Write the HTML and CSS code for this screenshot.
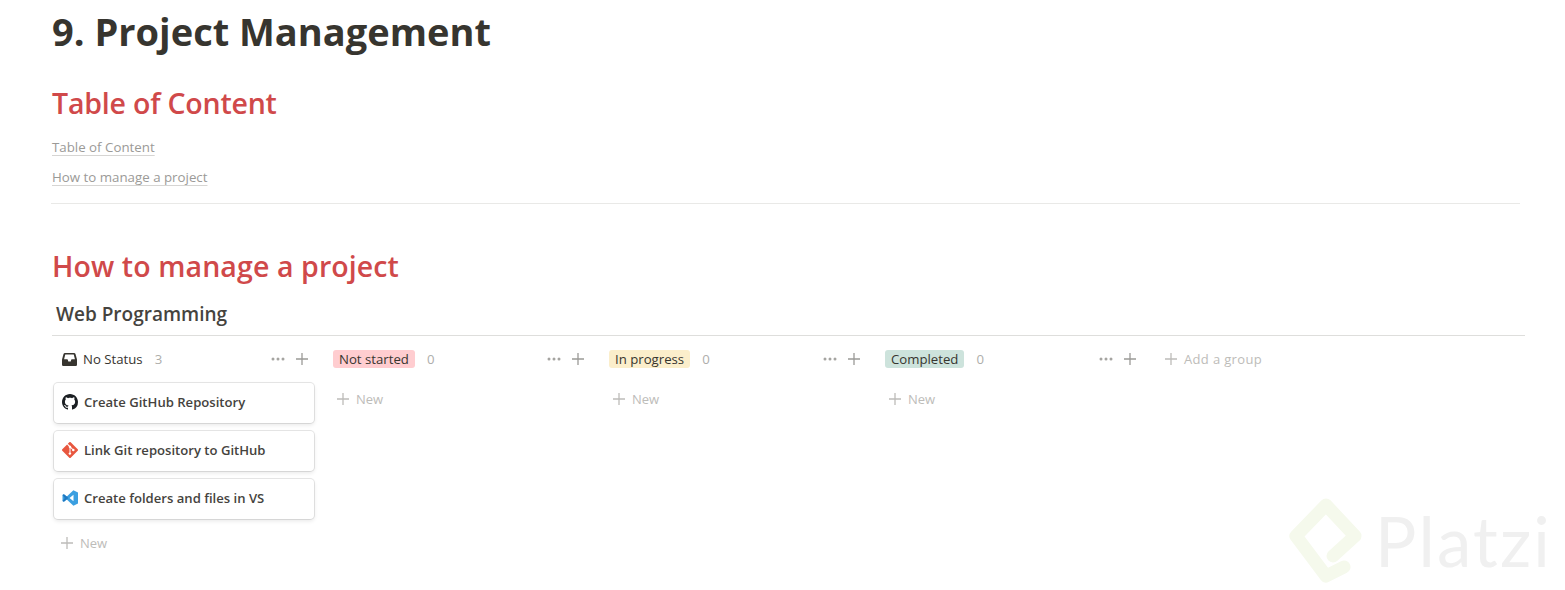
FILE: index.html
```html
<!DOCTYPE html>
<html>
<head>
  <title>9. Project Management</title>
  <link rel="stylesheet" href="styles.css">
</head>
<body>

<div class="page">
  <h1 class="page-title">9. Project Management</h1>

  <h2 class="section-title first">Table of Content</h2>
  <div class="toc">
    <div class="toc-row"><a class="toc-link">Table of Content</a></div>
    <div class="toc-row"><a class="toc-link">How to manage a project</a></div>
  </div>
  <div class="divider"></div>

  <h2 class="section-title second">How to manage a project</h2>
  <div class="db-title">Web Programming</div>

  <div class="board">
    <div class="column">
      <div class="column-head">
        <span class="status-plain">
          <svg class="inbox-icon" viewBox="0 0 16 16" width="15" height="15"><path fill="#37352f" d="M3.200 1h9.600c.8 0 1.300.4 1.600 1.100L16 8v5.300c0 1-.7 1.700-1.700 1.700H1.700C.7 15 0 14.300 0 13.300V8l1.600-5.900C1.900 1.400 2.400 1 3.200 1z"/><path fill="#fff" d="M3.500 2.700h9l1.300 5.100h-3.300c-.4 0-.6.200-.7.500L9.300 10H6.700l-.5-1.700c-.1-.3-.3-.5-.7-.5H2.200z"/></svg>
          No Status
        </span>
        <span class="count">3</span>
        <span class="head-actions">
          <svg class="dots" viewBox="0 0 14 4" width="14" height="4"><circle cx="2" cy="2" r="1.500"/><circle cx="7" cy="2" r="1.500"/><circle cx="12" cy="2" r="1.500"/></svg>
          <svg class="plus" viewBox="0 0 12 12" width="12" height="12"><path d="M6 0v12M0 6h12"/></svg>
        </span>
      </div>

      <div class="card">
        <svg class="card-icon" viewBox="0 0 16 16" width="16" height="16"><path fill="#1b1f23" d="M8 0C3.580 0 0 3.580 0 8c0 3.540 2.290 6.530 5.470 7.590.4.070.55-.17.55-.38 0-.19-.01-.82-.01-1.490-2.010.37-2.530-.49-2.690-.94-.09-.23-.48-.94-.82-1.130-.28-.15-.68-.52-.01-.53.63-.01 1.080.58 1.230.82.720 1.210 1.870.870 2.330.660.070-.520.280-.870.510-1.070-1.780-.200-3.640-.890-3.640-3.950 0-.870.310-1.590.820-2.150-.080-.200-.360-1.020.080-2.120 0 0 .670-.210 2.200.820.640-.180 1.320-.270 2-.270s1.360.090 2 .270c1.530-1.040 2.200-.820 2.200-.820.440 1.100.160 1.920.080 2.120.510.560.820 1.270.820 2.150 0 3.070-1.870 3.750-3.650 3.950.290.250.540.730.540 1.480 0 1.070-.010 1.930-.010 2.200 0 .210.150.460.550.380A8.010 8.010 0 0 0 16 8c0-4.420-3.580-8-8-8z"/></svg>
        <span class="card-name">Create GitHub Repository</span>
      </div>
      <div class="card">
        <svg class="card-icon" viewBox="0 0 16 16" width="16" height="16"><path fill="#e8573f" d="M15.700 7.300 8.700.3a1 1 0 0 0-1.400 0L5.800 1.800l1.800 1.800a1.200 1.200 0 0 1 1.500 1.500l1.800 1.800a1.200 1.200 0 1 1-.7.700L8.500 6.100v4.400a1.200 1.200 0 1 1-1-.100V6a1.200 1.200 0 0 1-.6-1.600L5.100 2.500.3 7.300a1 1 0 0 0 0 1.400l7 7a1 1 0 0 0 1.400 0l7-7a1 1 0 0 0 0-1.400z"/></svg>
        <span class="card-name">Link Git repository to GitHub</span>
      </div>
      <div class="card">
        <svg class="card-icon" viewBox="0 0 16 16" width="16" height="16"><path fill="#3b9fe0" d="M11.400.2 16 2.400v11.200l-4.600 2.200-6.600-6.300-2.900 2.200L.5 11V5l1.400-.7 2.900 2.200zM11.500 4.800 7.500 8l4 3.200z"/><path fill="#1f78c1" d="M.5 5l1.400-.7L4.800 6.500 6.400 8l-4.500 3.700L.5 11l2.300-3z"/></svg>
        <span class="card-name">Create folders and files in VS</span>
      </div>

      <div class="new-row first-new">
        <svg class="plus light" viewBox="0 0 12 12" width="12" height="12"><path d="M6 0v12M0 6h12"/></svg>
        New
      </div>
    </div>

    <div class="column">
      <div class="column-head">
        <span class="pill pill-red">Not started</span>
        <span class="count">0</span>
        <span class="head-actions">
          <svg class="dots" viewBox="0 0 14 4" width="14" height="4"><circle cx="2" cy="2" r="1.500"/><circle cx="7" cy="2" r="1.500"/><circle cx="12" cy="2" r="1.500"/></svg>
          <svg class="plus" viewBox="0 0 12 12" width="12" height="12"><path d="M6 0v12M0 6h12"/></svg>
        </span>
      </div>
      <div class="new-row">
        <svg class="plus light" viewBox="0 0 12 12" width="12" height="12"><path d="M6 0v12M0 6h12"/></svg>
        New
      </div>
    </div>

    <div class="column">
      <div class="column-head">
        <span class="pill pill-yellow">In progress</span>
        <span class="count">0</span>
        <span class="head-actions">
          <svg class="dots" viewBox="0 0 14 4" width="14" height="4"><circle cx="2" cy="2" r="1.500"/><circle cx="7" cy="2" r="1.500"/><circle cx="12" cy="2" r="1.500"/></svg>
          <svg class="plus" viewBox="0 0 12 12" width="12" height="12"><path d="M6 0v12M0 6h12"/></svg>
        </span>
      </div>
      <div class="new-row">
        <svg class="plus light" viewBox="0 0 12 12" width="12" height="12"><path d="M6 0v12M0 6h12"/></svg>
        New
      </div>
    </div>

    <div class="column">
      <div class="column-head">
        <span class="pill pill-green">Completed</span>
        <span class="count">0</span>
        <span class="head-actions">
          <svg class="dots" viewBox="0 0 14 4" width="14" height="4"><circle cx="2" cy="2" r="1.500"/><circle cx="7" cy="2" r="1.500"/><circle cx="12" cy="2" r="1.500"/></svg>
          <svg class="plus" viewBox="0 0 12 12" width="12" height="12"><path d="M6 0v12M0 6h12"/></svg>
        </span>
      </div>
      <div class="new-row">
        <svg class="plus light" viewBox="0 0 12 12" width="12" height="12"><path d="M6 0v12M0 6h12"/></svg>
        New
      </div>
    </div>

    <div class="add-group">
      <svg class="plus light" viewBox="0 0 12 12" width="12" height="12"><path d="M6 0v12M0 6h12"/></svg>
      Add a group
    </div>
  </div>
</div>

<!-- watermark sits over the page corner -->
<div class="watermark">
  <svg class="watermark-logo" viewBox="0 0 74 86" width="74" height="86"><path fill="none" stroke="#f5f9ec" stroke-width="13" stroke-linejoin="round" stroke-linecap="round" d="M56 69 38 78 8 38 38 7 67 38 45 58"/></svg>
  <span class="watermark-text">Platzi</span>
</div>

</body>
</html>
```

FILE: styles.css
```css
body {
  margin: 0;
  background-color: #fff;
  color: #37352f;
  font-family: "Open Sans", "Noto Sans", Arial, sans-serif;
  overflow: hidden;
}

.page {
  padding: 5px 40px 0 52px;
  height: 585px;
}

.page-title {
  margin: 0;
  font-size: 38px;
  line-height: 52px;
  font-weight: 700;
}

.section-title {
  margin: 0;
  font-size: 28.500px;
  line-height: 40px;
  font-weight: 600;
  color: #d0494a;
}

.section-title.first {
  margin-top: 26px;
  letter-spacing: -0.2px;
}

.section-title.second {
  margin-top: 42px;
  letter-spacing: 0.1px;
}

/* table of content links */
.toc {
  margin-top: 8px;
}

.toc-row {
  height: 30px;
  line-height: 30px;
}

.toc-link {
  font-size: 13.300px;
  color: #9b9a97;
  text-decoration: underline;
  text-decoration-color: #d6d5d3;
  text-decoration-thickness: 1px;
  text-underline-offset: 3px;
  text-decoration-skip-ink: none;
}

.divider {
  height: 1px;
  background-color: #e9e9e7;
  margin: 12px 0 0 -1px;
  width: 1469px;
}

/* database */
.db-title {
  margin: 13px 0 0 4px;
  font-size: 19px;
  line-height: 30px;
  font-weight: 600;
  color: #45433e;
}

.board {
  display: flex;
  gap: 16px;
  margin-top: 6px;
  padding-top: 11px;
  padding-left: 2px;
  border-top: 1px solid #dededc;
  width: 1471px;
}

.column {
  width: 260px;
}

.column-head {
  display: flex;
  align-items: center;
  height: 24px;
  font-size: 13.200px;
  padding-left: 3px;
}

.status-plain {
  display: flex;
  align-items: center;
  gap: 6px;
  padding-left: 5px;
}

.pill {
  height: 18px;
  line-height: 18px;
  padding: 0 6px;
  border-radius: 3px;
}

.pill-red {
  background-color: #ffcdd0;
}

.pill-yellow {
  background-color: #fbeecb;
}

.pill-green {
  background-color: #cde3dc;
}

.count {
  margin-left: 12px;
  color: #aeaeab;
}

.head-actions {
  margin-left: auto;
  display: flex;
  align-items: center;
  gap: 11px;
  padding-right: 6px;
}

.dots {
  fill: #a5a4a1;
}

.plus {
  stroke: #9b9a97;
  stroke-width: 1.300;
  fill: none;
}

.plus.light {
  stroke: #bdbcb9;
}

.card {
  display: flex;
  align-items: center;
  gap: 6px;
  height: 38px;
  margin-top: 12px;
  margin-bottom: 8px;
  padding-left: 8px;
  padding-bottom: 2px;
  background-color: #fff;
  border-radius: 4px;
  box-shadow: 0 0 0 1px rgba(15, 15, 15, 0.1), 0 2px 4px rgba(15, 15, 15, 0.1);
  font-size: 13.100px;
  font-weight: 600;
  color: #45433e;
}

.card + .card {
  margin-top: 0;
}

.new-row {
  display: flex;
  align-items: center;
  gap: 7px;
  height: 24px;
  margin-top: 16px;
  padding-left: 7px;
  font-size: 13px;
  color: #bdbcb9;
}

.new-row.first-new {
  margin-top: 0;
  padding-top: 4px;
}

.add-group {
  display: flex;
  align-items: center;
  gap: 7px;
  height: 24px;
  padding-left: 7px;
  font-size: 13px;
  letter-spacing: 0.35px;
  color: #bdbcb9;
}

/* platzi mark */
.watermark {
  position: absolute;
  left: 1288px;
  top: 498px;
  display: flex;
  align-items: center;
  gap: 13px;
}

.watermark-text {
  font-family: "Lato", sans-serif;
  font-size: 69px;
  line-height: 86px;
  letter-spacing: 2.200px;
  color: #f0f0f0;
}
```
